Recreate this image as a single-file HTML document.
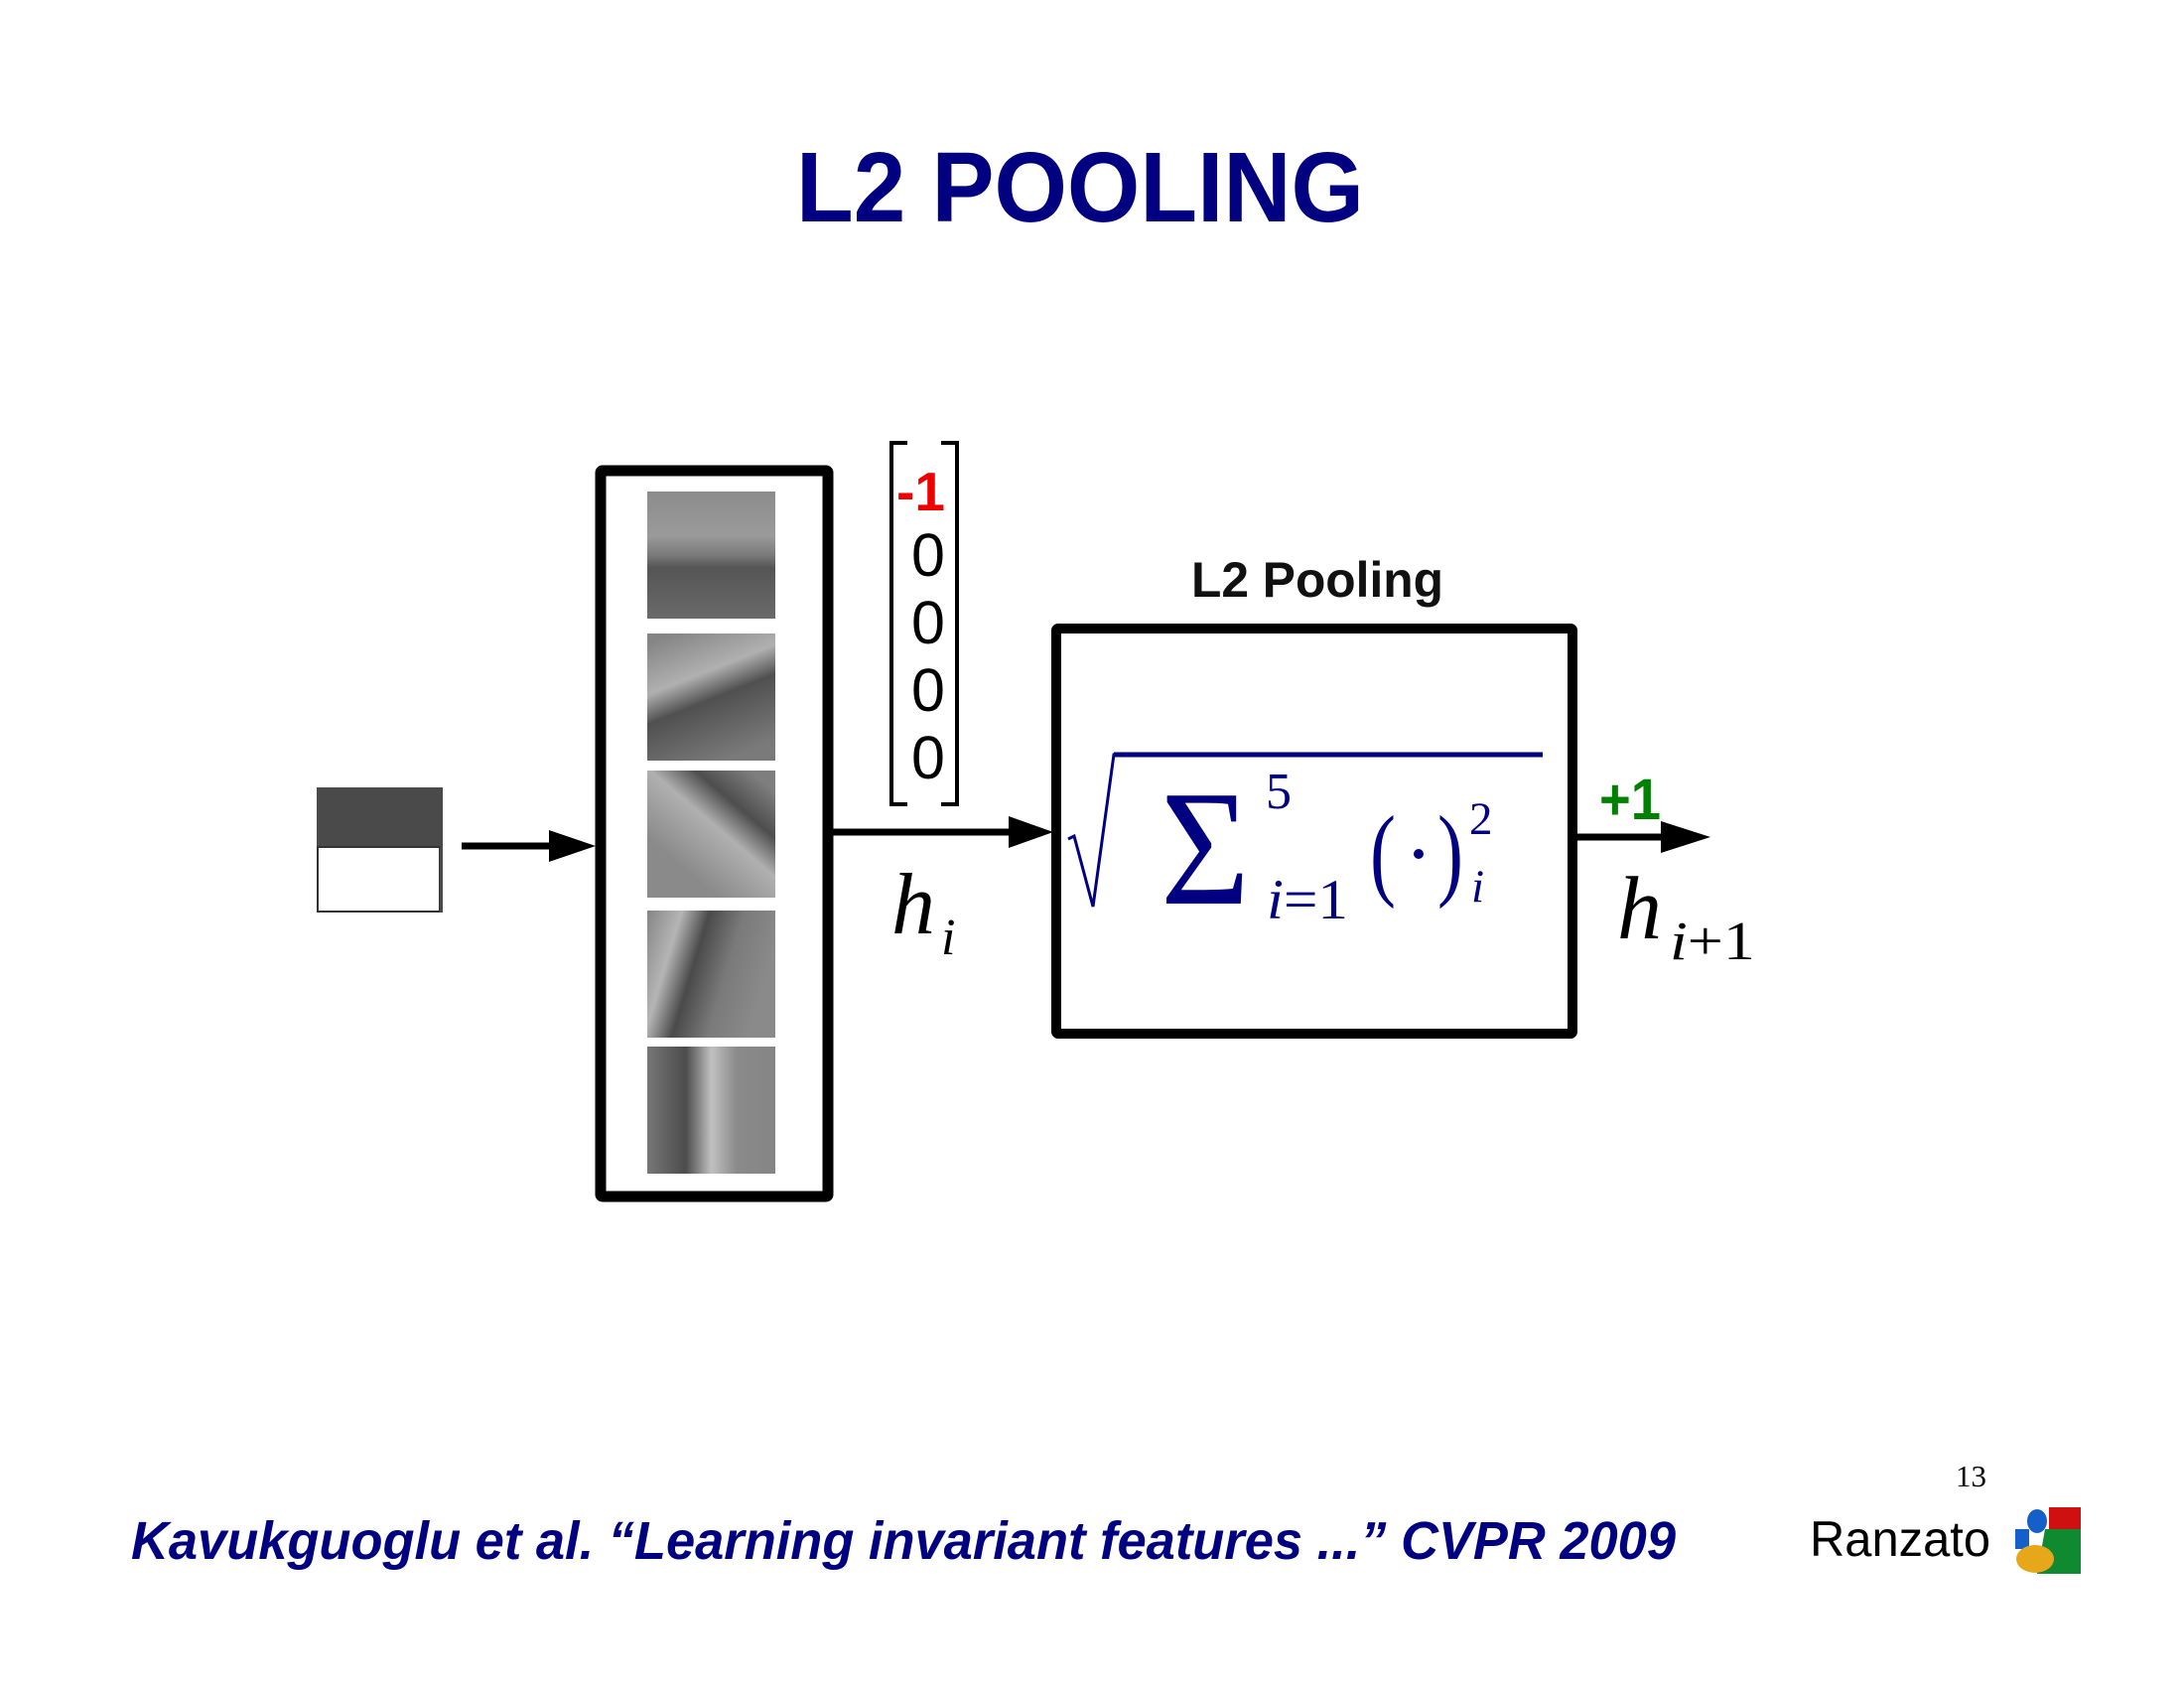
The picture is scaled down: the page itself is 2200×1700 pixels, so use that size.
<!DOCTYPE html>
<html><head><meta charset="utf-8"><style>
html,body{margin:0;padding:0;background:#fff;}
svg{display:block;}
</style></head><body>
<svg width="2200" height="1700" viewBox="0 0 2200 1700" xmlns="http://www.w3.org/2000/svg">
<defs>
<linearGradient id="p1" x1="0" y1="0" x2="0" y2="1">
<stop offset="0" stop-color="#8c8c8c"/><stop offset="0.35" stop-color="#9a9a9a"/><stop offset="0.5" stop-color="#7a7a7a"/><stop offset="0.6" stop-color="#555"/><stop offset="1" stop-color="#6a6a6a"/></linearGradient>
<linearGradient id="p2" x1="0.2" y1="0" x2="0.6" y2="1">
<stop offset="0" stop-color="#858585"/><stop offset="0.35" stop-color="#b0b0b0"/><stop offset="0.55" stop-color="#505050"/><stop offset="1" stop-color="#7a7a7a"/></linearGradient>
<linearGradient id="p3" x1="0.8" y1="0" x2="0.2" y2="0.7">
<stop offset="0" stop-color="#7e7e7e"/><stop offset="0.3" stop-color="#4e4e4e"/><stop offset="0.55" stop-color="#b0b0b0"/><stop offset="1" stop-color="#8a8a8a"/></linearGradient>
<linearGradient id="p4" x1="0" y1="0" x2="1" y2="0.3">
<stop offset="0" stop-color="#858585"/><stop offset="0.25" stop-color="#b5b5b5"/><stop offset="0.45" stop-color="#4a4a4a"/><stop offset="0.7" stop-color="#7a7a7a"/><stop offset="1" stop-color="#8a8a8a"/></linearGradient>
<linearGradient id="p5" x1="0" y1="0" x2="1" y2="0">
<stop offset="0" stop-color="#777"/><stop offset="0.3" stop-color="#4c4c4c"/><stop offset="0.5" stop-color="#c0c0c0"/><stop offset="0.7" stop-color="#8a8a8a"/><stop offset="1" stop-color="#858585"/></linearGradient>
</defs>

<text x="802" y="223" font-family="Liberation Sans, sans-serif" font-weight="bold" font-size="100" fill="#000080" textLength="572" lengthAdjust="spacingAndGlyphs">L2 POOLING</text>

<rect x="319" y="793" width="127" height="60" fill="#4a4a4a"/>
<rect x="320" y="853" width="123" height="65" fill="#fff" stroke="#333" stroke-width="2"/>
<rect x="443" y="853" width="3" height="66" fill="#4a4a4a"/>
<line x1="465" y1="852" x2="560" y2="852" stroke="#000" stroke-width="7"/>
<polygon points="553,836 600,852 553,868" fill="#000"/>

<rect x="605" y="474" width="229" height="731" fill="#fff" stroke="#000" stroke-width="11" rx="2"/>
<rect x="652" y="495" width="129" height="128" fill="url(#p1)"/>
<rect x="652" y="638" width="129" height="128" fill="url(#p2)"/>
<rect x="652" y="776" width="129" height="128" fill="url(#p3)"/>
<rect x="652" y="917" width="129" height="128" fill="url(#p4)"/>
<rect x="652" y="1054" width="129" height="128" fill="url(#p5)"/>

<path d="M914,446 H898 V810 H914" fill="none" stroke="#000" stroke-width="4"/>
<path d="M948,446 H964 V810 H948" fill="none" stroke="#000" stroke-width="4"/>
<text x="903" y="514" font-family="Liberation Sans, sans-serif" font-weight="bold" font-size="55" fill="#ee0000">-1</text>
<g font-family="Liberation Sans, sans-serif" font-size="61" fill="#000">
<text x="918" y="580">0</text><text x="918" y="648">0</text><text x="918" y="716">0</text><text x="918" y="784">0</text></g>

<line x1="839" y1="838" x2="1025" y2="838" stroke="#000" stroke-width="7"/>
<polygon points="1016,822 1061,838 1016,854" fill="#000"/>
<text x="898" y="940" font-family="Liberation Serif, serif" font-style="italic" font-size="88" fill="#000">h</text>
<text x="948" y="961" font-family="Liberation Serif, serif" font-style="italic" font-size="52" fill="#000">i</text>

<text x="1200" y="601" font-family="Liberation Sans, sans-serif" font-weight="bold" font-size="50" fill="#111" textLength="254" lengthAdjust="spacingAndGlyphs">L2 Pooling</text>
<rect x="1064" y="633" width="520" height="408" fill="#fff" stroke="#000" stroke-width="10" rx="2"/>
<path d="M1076,845 L1082,842 L1101,913 L1122,760 H1554" fill="none" stroke="#000080" stroke-width="3"/>
<line x1="1122" y1="760" x2="1554" y2="760" stroke="#000080" stroke-width="5"/>
<g fill="#000080" font-family="Liberation Serif, serif">
<text x="1169" y="910" font-size="166" textLength="90" lengthAdjust="spacingAndGlyphs">Σ</text>
<text x="1275" y="814" font-size="52">5</text>
<text x="1276" y="925" font-size="57" textLength="82" lengthAdjust="spacingAndGlyphs"><tspan font-style="italic">i</tspan>=1</text>
<text x="1380" y="893" font-size="104" textLength="26" lengthAdjust="spacingAndGlyphs">(</text>
<circle cx="1429" cy="860" r="5"/>
<text x="1448" y="893" font-size="104" textLength="26" lengthAdjust="spacingAndGlyphs">)</text>
<text x="1480" y="840" font-size="47">2</text>
<text x="1482" y="908" font-size="47" font-style="italic">i</text>
</g>

<line x1="1589" y1="843" x2="1680" y2="843" stroke="#000" stroke-width="7"/>
<polygon points="1673,827 1723,843 1673,859" fill="#000"/>
<text x="1611" y="825" font-family="Liberation Sans, sans-serif" font-weight="bold" font-size="58" fill="#008000" textLength="62" lengthAdjust="spacingAndGlyphs">+1</text>
<text x="1629" y="945" font-family="Liberation Serif, serif" font-style="italic" font-size="90" fill="#000">h</text>
<text x="1682" y="966" font-family="Liberation Serif, serif" font-size="55" fill="#000" textLength="86" lengthAdjust="spacingAndGlyphs"><tspan font-style="italic">i</tspan>+1</text>

<text x="132" y="1570" font-family="Liberation Sans, sans-serif" font-style="italic" font-weight="bold" font-size="54" fill="#000080" textLength="1556" lengthAdjust="spacingAndGlyphs">Kavukguoglu et al. “Learning invariant features ...” CVPR 2009</text>
<text x="1970" y="1497" font-family="Liberation Serif, serif" font-size="31" fill="#000">13</text>
<text x="1823" y="1567" font-family="Liberation Sans, sans-serif" font-size="50" fill="#000" textLength="182" lengthAdjust="spacingAndGlyphs">Ranzato</text>
<g>
<rect x="2064" y="1518" width="32" height="22" fill="#d01010"/>
<path d="M2060,1540 H2096 V1585 H2052 Z" fill="#108a30"/>
<ellipse cx="2052" cy="1532" rx="10" ry="12" fill="#1560c8"/>
<rect x="2030" y="1540" width="14" height="20" fill="#1560c8"/>
<ellipse cx="2050" cy="1570" rx="19" ry="14" fill="#e6a81a"/>
</g>
</svg>
</body></html>
